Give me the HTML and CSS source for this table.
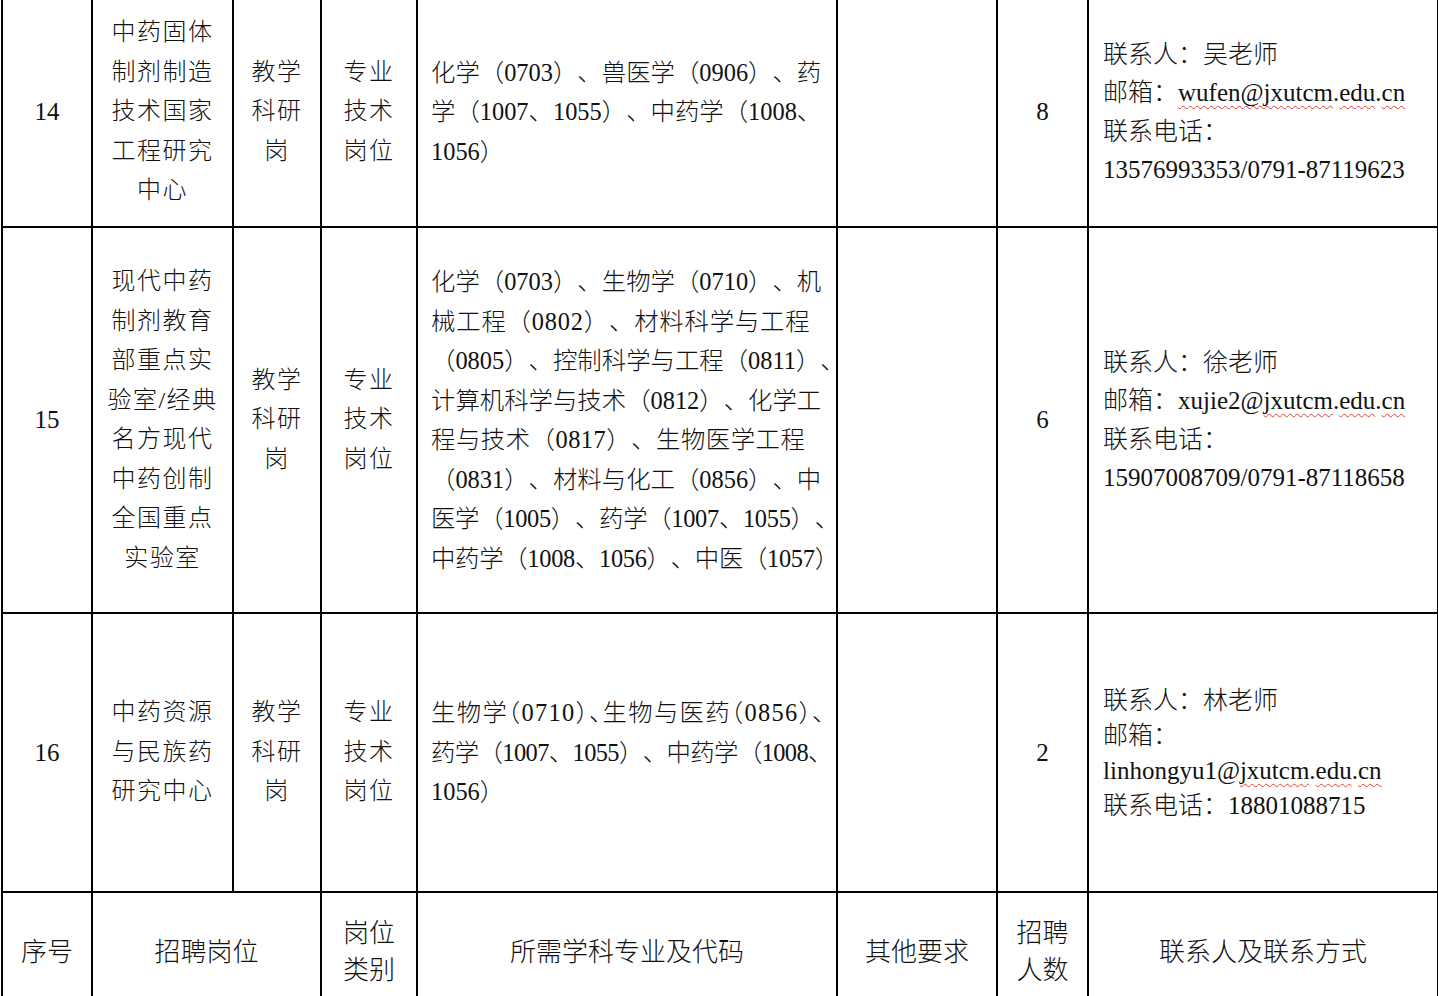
FILE: index.html
```html
<!DOCTYPE html>
<html lang="zh-CN">
<head>
<meta charset="utf-8">
<title>招聘岗位表</title>
<link rel="stylesheet" href="styles.css">
</head>
<body>
<table class="grid">
  <colgroup>
    <col class="c-no"><col class="c-unit"><col class="c-post"><col class="c-type"><col class="c-major"><col class="c-other"><col class="c-num"><col class="c-contact">
  </colgroup>
  <tbody>
    <tr class="r14">
      <td class="no">14</td>
      <td class="unit"><span class="ln">中药固体</span><span class="ln">制剂制造</span><span class="ln">技术国家</span><span class="ln">工程研究</span><span class="ln">中心</span></td>
      <td class="unit"><span class="ln">教学</span><span class="ln">科研</span><span class="ln">岗</span></td>
      <td class="unit"><span class="ln">专业</span><span class="ln">技术</span><span class="ln">岗位</span></td>
      <td class="major"><span class="ln">化学（0703）、兽医学（0906）、药</span><span class="ln">学（1007、1055）、中药学（1008、</span><span class="ln">1056）</span></td>
      <td class="other"></td>
      <td class="no">8</td>
      <td class="contact"><span class="ln">联系人：吴老师</span><span class="ln">邮箱：<span class="sp">wufen@jxutcm</span>.<span class="sp">edu</span>.<span class="sp">cn</span></span><span class="ln">联系电话：</span><span class="ln">13576993353/0791-87119623</span></td>
    </tr>
    <tr class="r15">
      <td class="no">15</td>
      <td class="unit"><span class="ln">现代中药</span><span class="ln">制剂教育</span><span class="ln">部重点实</span><span class="ln">验室/经典</span><span class="ln">名方现代</span><span class="ln">中药创制</span><span class="ln">全国重点</span><span class="ln">实验室</span></td>
      <td class="unit"><span class="ln">教学</span><span class="ln">科研</span><span class="ln">岗</span></td>
      <td class="unit"><span class="ln">专业</span><span class="ln">技术</span><span class="ln">岗位</span></td>
      <td class="major"><span class="ln">化学（0703）、生物学（0710）、机</span><span class="ln loose">械工程（0802）、材料科学与工程</span><span class="ln">（0805）、控制科学与工程（0811）、</span><span class="ln">计算机科学与技术（0812）、化学工</span><span class="ln semi">程与技术（0817）、生物医学工程</span><span class="ln">（0831）、材料与化工（0856）、中</span><span class="ln tighter">医学（1005）、药学（1007、1055）、</span><span class="ln tighter">中药学（1008、1056）、中医（1057）</span></td>
      <td class="other"></td>
      <td class="no">6</td>
      <td class="contact"><span class="ln">联系人：徐老师</span><span class="ln">邮箱：xujie2@<span class="sp">jxutcm</span>.<span class="sp">edu</span>.<span class="sp">cn</span></span><span class="ln">联系电话：</span><span class="ln">15907008709/0791-87118658</span></td>
    </tr>
    <tr class="r16">
      <td class="no">16</td>
      <td class="unit"><span class="ln">中药资源</span><span class="ln">与民族药</span><span class="ln">研究中心</span></td>
      <td class="unit"><span class="ln">教学</span><span class="ln">科研</span><span class="ln">岗</span></td>
      <td class="unit"><span class="ln">专业</span><span class="ln">技术</span><span class="ln">岗位</span></td>
      <td class="major"><span class="ln halt">生物学（0710）、生物与医药（0856）、</span><span class="ln tight">药学（1007、1055）、中药学（1008、</span><span class="ln">1056）</span></td>
      <td class="other"></td>
      <td class="no">2</td>
      <td class="contact c16"><span class="ln">联系人：林老师</span><span class="ln">邮箱：</span><span class="ln">linhongyu1@<span class="sp">jxutcm</span>.<span class="sp">edu</span>.<span class="sp">cn</span></span><span class="ln">联系电话：18801088715</span></td>
    </tr>
    <tr class="rhead">
      <td class="head">序号</td>
      <td class="head" colspan="2">招聘岗位</td>
      <td class="head"><span class="ln">岗位</span><span class="ln">类别</span></td>
      <td class="head">所需学科专业及代码</td>
      <td class="head">其他要求</td>
      <td class="head"><span class="ln">招聘</span><span class="ln">人数</span></td>
      <td class="head">联系人及联系方式</td>
    </tr>
  </tbody>
</table>
</body>
</html>
```

FILE: styles.css
```css
html, body {
  margin: 0;
  padding: 0;
  background: #ffffff;
  overflow: hidden;
}

body {
  width: 1438px;
  height: 996px;
  color: #111;
  font-family: "Liberation Serif", "Noto Sans CJK SC", serif;
  font-weight: 300;
  text-spacing-trim: space-all;
}

.grid {
  border-collapse: collapse;
  table-layout: fixed;
  width: 1436px;
  margin: -4px 0 0 1px;
}

.c-no { width: 90px; }
.c-unit { width: 141px; }
.c-post { width: 88px; }
.c-type { width: 96px; }
.c-major { width: 420px; }
.c-other { width: 160px; }
.c-num { width: 91px; }
.c-contact { width: 350px; }

.grid td {
  border: 2.5px solid #000;
  padding: 0;
  vertical-align: middle;
}

.r14 { height: 230px; }
.r15 { height: 386px; }
.r16 { height: 279px; }
.rhead { height: 114px; }

.ln {
  display: block;
  white-space: nowrap;
}

.no {
  text-align: center;
  font-size: 25px;
}

.unit {
  text-align: center;
  font-size: 24px;
  letter-spacing: 1.5px;
  line-height: 39.5px;
}

.major {
  font-size: 24.4px;
  line-height: 39.5px;
  padding: 0 2px 0 13px !important;
}

.major .loose { letter-spacing: 0.8px; }
.major .semi { letter-spacing: 0.5px; }
.major .tighter { letter-spacing: -0.3px; }
.major .tight { letter-spacing: -0.6px; }
.major .halt {
  font-feature-settings: "halt";
  letter-spacing: 1.3px;
}

.contact {
  font-size: 25px;
  line-height: 38.5px;
  padding: 1px 4px 0 14px !important;
}

.contact.c16 { line-height: 35px; padding-top: 0 !important; }

.sp {
  text-decoration: underline wavy #d9453c;
  text-decoration-thickness: 1.2px;
  text-underline-offset: 4px;
  text-decoration-skip-ink: none;
}

.head {
  text-align: center;
  font-family: "Noto Sans CJK SC", sans-serif;
  font-size: 26px;
  line-height: 37px;
}
```
